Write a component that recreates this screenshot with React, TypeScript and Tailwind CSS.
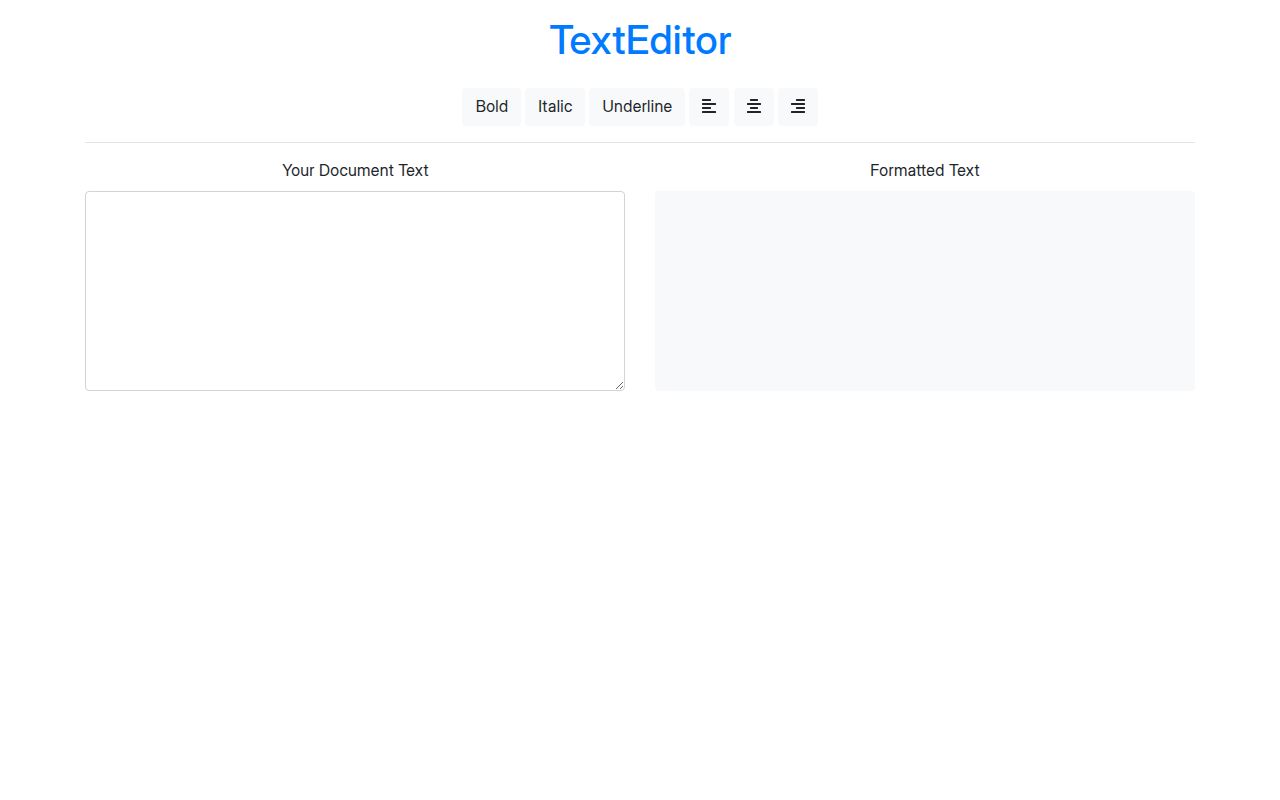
import { FaAlignLeft, FaAlignCenter, FaAlignRight } from "react-icons/fa";

const btn =
  "h-[38px] rounded-[4px] bg-[#f8f9fa] pt-1.5 pb-2 pl-px text-center leading-6 text-[#212529]";
const iconBtn =
  "flex h-[38px] w-10 items-start justify-center rounded-[4px] bg-[#f8f9fa] pt-[10px] text-[#212529]";

export default function App() {
  return (
    <div className="min-h-screen bg-white font-['Inter_Display','Inter',sans-serif] text-base leading-6 tracking-[0.3px] text-[#212529]">
      <main className="mx-auto w-[1140px] px-[15px] pt-4 text-center">
        <h1 className="mb-6 pl-px text-[40px] font-medium leading-[48px] tracking-[0.25px] text-[#007bff]">TextEditor</h1>
        <div className="flex justify-center gap-1">
          <button className={`${btn} w-[59px]`}>Bold</button>
          <button className={`${btn} w-[60px] tracking-[0.4px]`}>Italic</button>
          <button className={`${btn} w-24 tracking-[0.4px]`}>Underline</button>
          <button className={iconBtn} aria-label="Align left">
            <FaAlignLeft className="h-4 w-3.5" />
          </button>
          <button className={`${iconBtn} ml-px`} aria-label="Align center">
            <FaAlignCenter className="h-4 w-3.5" />
          </button>
          <button className={iconBtn} aria-label="Align right">
            <FaAlignRight className="h-4 w-3.5" />
          </button>
        </div>
        <hr className="my-4 border-t border-black/10" />
        <div className="grid grid-cols-2 gap-[30px]">
          <section>
            <label htmlFor="source" className="-mt-px mb-[9px] block pl-px tracking-[0.28px]">Your Document Text</label>
            <textarea
              id="source"
              className="block h-[200px] w-full resize rounded-[4px] border border-[#ced4da] bg-white px-3 py-1.5"
            />
          </section>
          <section>
            <h2 className="-mt-px mb-[9px] tracking-[0.35px]">Formatted Text</h2>
            <div className="h-[200px] rounded-[4px] bg-[#f8f9fa]" />
          </section>
        </div>
      </main>
    </div>
  );
}
